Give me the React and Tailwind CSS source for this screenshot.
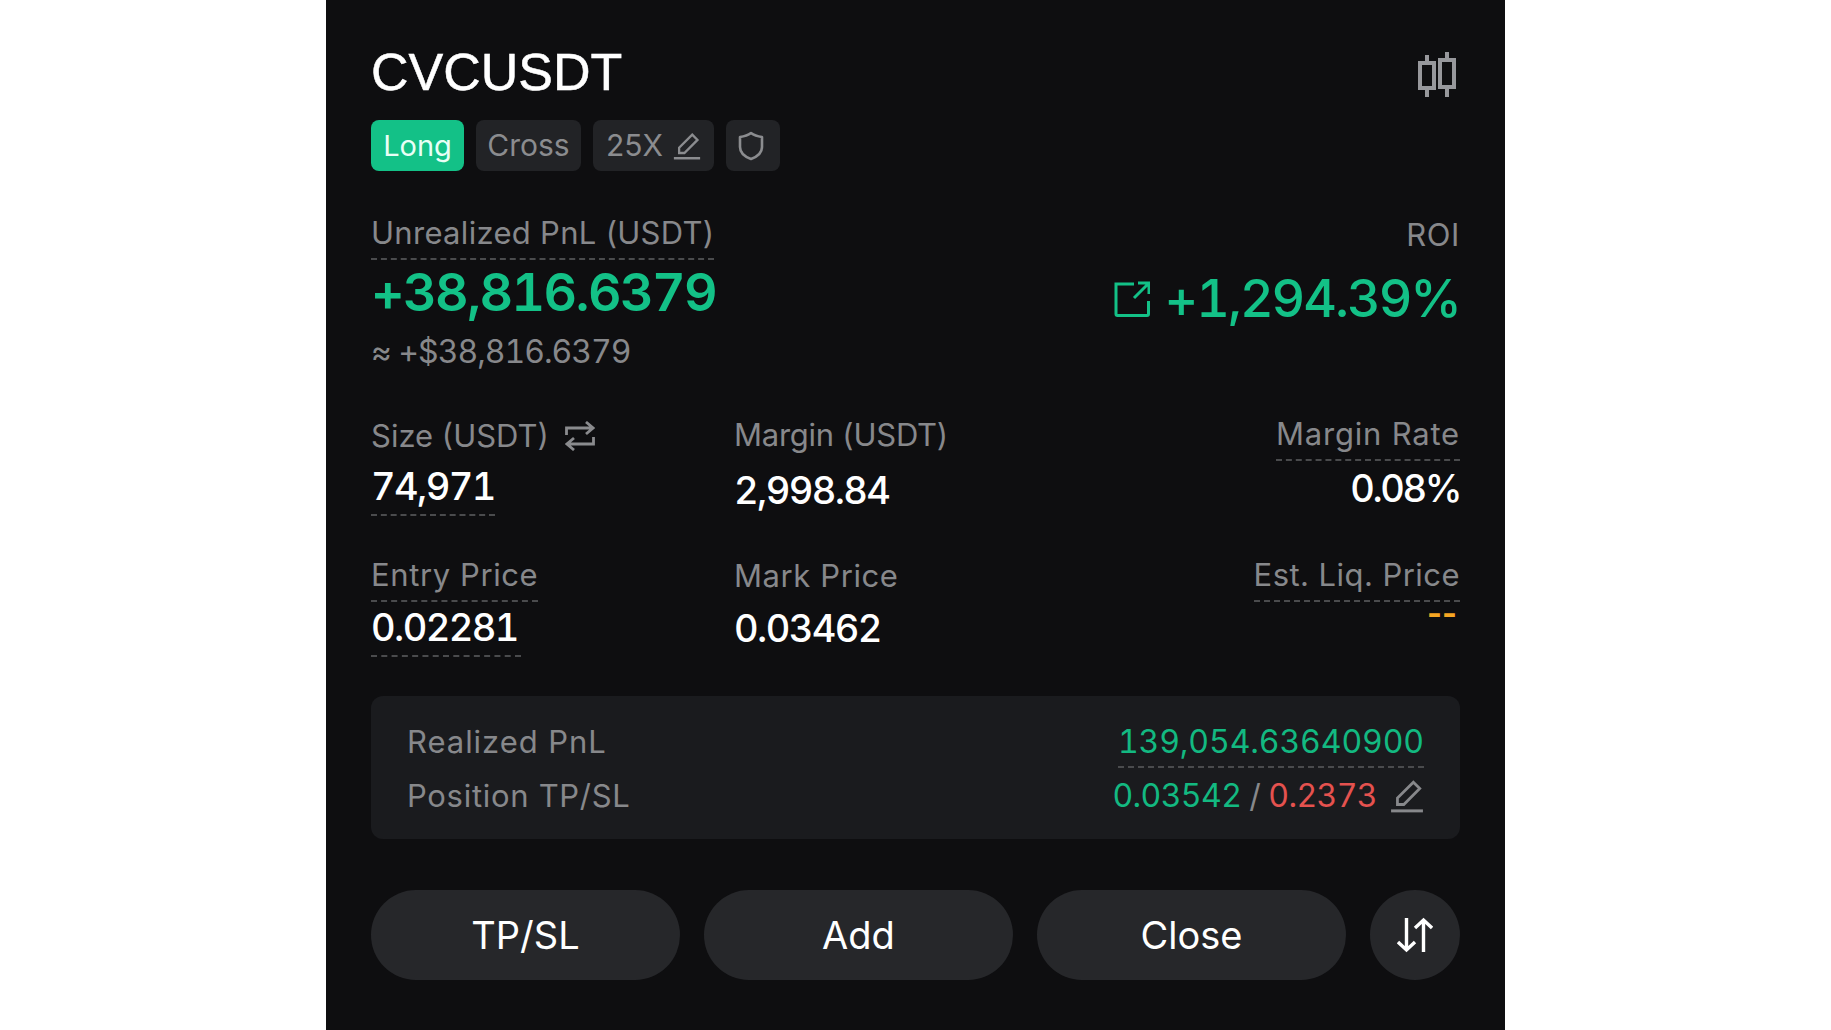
const dashed = 'border-b-2 border-dashed border-[#4a4b4d]';

function PencilIcon({ className }) {
  return (
    <svg viewBox="0 0 32 32" fill="none" stroke="currentColor" strokeWidth="2.6" className={className}>
      <path d="M22 3 L28 9 L13 24 H7 V18 Z" strokeLinejoin="miter" />
      <path d="M1 30 H31" strokeWidth="2.8" />
    </svg>
  );
}

function ShieldIcon() {
  return (
    <svg viewBox="0 0 26 30" fill="none" stroke="currentColor" strokeWidth="2.6" className="h-[30px] w-[26px]">
      <path d="M2 6 Q9 5 13 2 Q17 5 24 6 V16 Q24 24 13 28 Q2 24 2 16 Z" strokeLinejoin="round" />
    </svg>
  );
}

function CandleIcon() {
  return (
    <svg viewBox="0 0 40 46" fill="none" stroke="#97989c" strokeWidth="4" className="h-[46px] w-[40px]">
      <rect x="2" y="11" width="14" height="25" />
      <rect x="22" y="8" width="14" height="27" />
      <path d="M9 3 V11 M9 36 V45 M29 0 V8 M29 35 V45" />
    </svg>
  );
}

function ShareIcon() {
  return (
    <svg viewBox="0 0 36 36" fill="none" stroke="currentColor" strokeWidth="3" className="h-[36px] w-[36px]">
      <path d="M20 3 H2 V33 Q2 34.5 3.5 34.5 H33 Q34.5 34.5 34.5 33 V20" />
      <path d="M20 17 L34 3 M24 2 H35 V13" />
    </svg>
  );
}

function SwapIcon() {
  return (
    <svg viewBox="0 0 30 30" fill="none" stroke="#8a8b8e" strokeWidth="2.8" className="h-[30px] w-[30px]">
      <path d="M1.500 14 V7 H28 M21 1 L28 7 L21 13" />
      <path d="M28.500 16 V23 H2 M9 17 L2 23 L9 29" />
    </svg>
  );
}

function SortIcon() {
  return (
    <svg viewBox="0 0 36 36" fill="none" stroke="#fff" strokeWidth="3.4" className="h-[36px] w-[36px]">
      <path d="M9.500 1 V33 M1 25 L9.500 33 L18 25" />
      <path d="M26.500 35 V3 M18 11 L26.500 3 L35 11" />
    </svg>
  );
}

function Tag({ children, className = '' }) {
  return (
    <div className={`flex h-[51px] items-center justify-center rounded-lg bg-[#222326] text-[#8b8c8f] ${className}`}>
      {children}
    </div>
  );
}

function Label({ children, line, className = 'tracking-[0.6px]' }) {
  return (
    <div className={`w-fit text-[31px] leading-[36px] text-[#87888b] ${line ? `${dashed} pb-[7px]` : ''} ${className}`}>
      {children}
    </div>
  );
}

function Value({ children, line, className = '' }) {
  return (
    <div className={`w-fit text-[38px] leading-[44px] font-medium tabular-nums tracking-[-1.6px] text-white ${line ? `${dashed} pb-[6px]` : ''} ${className}`}>
      {children}
    </div>
  );
}

function ActionButton({ children }) {
  return (
    <button className="flex h-[90px] w-[309px] items-center justify-center rounded-full bg-[#26272a] text-[38px] text-white">
      {children}
    </button>
  );
}

export default function App() {
  return (
    <div className="flex min-h-[1030px] justify-center bg-white font-['Inter',sans-serif]">
      <div className="h-[1030px] w-[1179px] bg-[#0e0e10] px-[45px] pt-[42px]">
        <div className="flex h-[60px] items-center justify-between">
          <h1 className="font-['Liberation_Sans',sans-serif] text-[52px] leading-[60px] text-white [-webkit-text-stroke:0.5px_white]">CVCUSDT</h1>
          <div className="mt-[6px] mr-[2px]">
            <CandleIcon />
          </div>
        </div>

        <div className="mt-[18px] flex gap-3 text-[30px]">
          <div className="flex h-[51px] w-[93px] items-center justify-center rounded-lg bg-[#13c187] text-[29px] text-[#e8fff6]">Long</div>
          <Tag className="w-[105px]">Cross</Tag>
          <Tag className="w-[121px] gap-[10px]">
            25X
            <PencilIcon className="h-[28px] w-[28px]" />
          </Tag>
          <Tag className="w-[54px] pr-1">
            <ShieldIcon />
          </Tag>
        </div>

        <div className="mt-[44px] flex items-start justify-between">
          <div>
            <Label line className="tracking-[0.3px]">Unrealized PnL (USDT)</Label>
            <div className="mt-[3px] text-[52px] leading-[60px] font-semibold tabular-nums tracking-[-1.6px] text-[#13c187]">+38,816.6379</div>
            <div className="mt-[11px] text-[32px] leading-[36px] tabular-nums tracking-[-1px] text-[#87888b]">≈ +$38,816.6379</div>
          </div>
          <div className="flex flex-col items-end">
            <Label className="mt-[2px] tracking-[0.6px]">ROI</Label>
            <div className="mt-[16px] flex items-center gap-[15px] text-[52px] leading-[60px] font-medium tabular-nums tracking-[-2px] text-[#13c187]">
              <ShareIcon />
              +1,294.39%
            </div>
          </div>
        </div>

        <div className="mt-[47px] grid grid-cols-[363px_1fr_auto]">
          <div>
            <div className="mt-px flex items-center gap-4">
              <Label className="tracking-normal">Size (USDT)</Label>
              <SwapIcon />
            </div>
            <Value line className="mt-[10px]">74,971</Value>
          </div>
          <div>
            <Label className="tracking-[-0.25px]">Margin (USDT)</Label>
            <Value className="mt-[15px]">2,998.84</Value>
          </div>
          <div className="-mt-px flex flex-col items-end">
            <Label line className="tracking-[0.8px]">Margin Rate</Label>
            <Value className="mt-[5px] tracking-[-2.4px]">0.08%</Value>
          </div>

          <div className="mt-[41px]">
            <Label line>Entry Price</Label>
            <Value line className="mt-[3px] pr-[3px]">0.02281</Value>
          </div>
          <div className="mt-[42px]">
            <Label>Mark Price</Label>
            <Value className="mt-[12px]">0.03462</Value>
          </div>
          <div className="mt-[41px] flex flex-col items-end">
            <Label line className="tracking-[0.45px]">Est. Liq. Price</Label>
            <div className="-mt-[3px] pr-[3px] text-[32px] leading-[30px] font-bold text-[#f5a623]">--</div>
          </div>
        </div>

        <div className="mt-[39px] h-[143px] rounded-xl bg-[#1a1b1e] px-9 pt-[28px]">
          <div className="flex items-start justify-between">
            <Label className="tracking-[0.95px]">Realized PnL</Label>
            <div className={`text-[32px] leading-[36px] tabular-nums tracking-[-0.1px] text-[#13b981] ${dashed} pb-[6px]`}>139,054.63640900</div>
          </div>
          <div className="mt-[10px] flex items-center justify-between">
            <Label className="tracking-[0.7px]">Position TP/SL</Label>
            <div className="flex items-center text-[32px] leading-[36px] tabular-nums tracking-[-0.6px]">
              <span className="text-[#13b981]">0.03542</span>
              <span className="mx-2 text-[#87888b]">/</span>
              <span className="text-[#e5524f]">0.2373</span>
              <PencilIcon className="ml-[13px] h-[34px] w-[34px] text-[#87888b]" />
            </div>
          </div>
        </div>

        <div className="mt-[51px] flex justify-between">
          <ActionButton>TP/SL</ActionButton>
          <ActionButton>Add</ActionButton>
          <ActionButton>Close</ActionButton>
          <button className="flex h-[90px] w-[90px] items-center justify-center rounded-full bg-[#26272a]">
            <SortIcon />
          </button>
        </div>
      </div>
    </div>
  );
}
